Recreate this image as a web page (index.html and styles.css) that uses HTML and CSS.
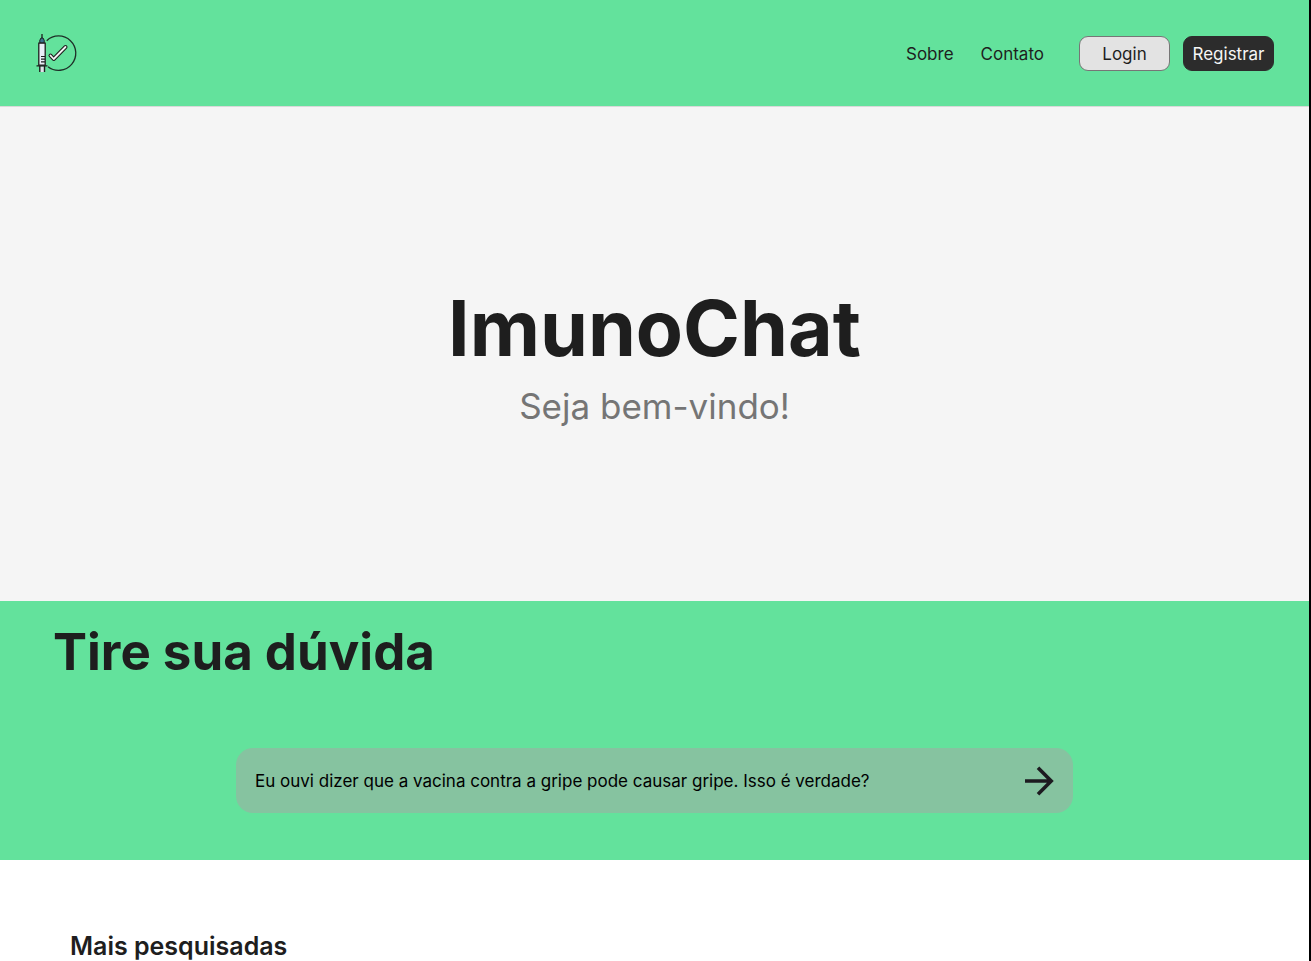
FILE: index.html
```html
<!DOCTYPE html>
<html lang="pt-BR">
<head>
<meta charset="utf-8">
<meta name="viewport" content="width=device-width, initial-scale=1">
<title>ImunoChat</title>
<link rel="stylesheet" href="styles.css">
</head>
<body>
<header class="header">
  <a class="logo" href="#" aria-label="ImunoChat">
    <svg class="logo-icon" viewBox="0 0 42 39" fill="none" aria-hidden="true">
      <path d="M11.700 6.700A17.200 17.200 0 1 1 13 32.700" stroke="#1e3028" stroke-width="1.300"/>
      <path d="M7 0v4" stroke="#1e1e1e" stroke-width="1.300"/>
      <path d="M4.800 9V6.300L6 4h2l1.200 2.300V9z" fill="#37718e" stroke="#1e1e1e"/>
      <path d="M3.800 9.200h6.400v22H3.800z" fill="#e9eef7" stroke="#1e1e1e" stroke-width="1.300"/>
      <path d="M6 22.500h4M6 25.200h4M6 27.900h4" stroke="#1e1e1e" stroke-width="1.200"/>
      <path d="M5 32.500h4.500V38H5z" fill="#dfe3ea"/>
      <path d="M1.500 31.900h11M4.800 32v6M9.500 32v6" stroke="#1e1e1e" stroke-width="1.400"/>
      <path d="m15.500 21.500 3.200 3.500L30.500 13" stroke="#1e1e1e" stroke-width="4" stroke-linecap="round" stroke-linejoin="round"/>
      <path d="m15.500 21.500 3.200 3.500L30.500 13" stroke="#f4f4f4" stroke-width="1.800" stroke-linecap="round" stroke-linejoin="round"/>
    </svg>
  </a>
  <nav class="nav">
    <a class="nav-link" href="#sobre">Sobre</a>
    <a class="nav-link" href="#contato">Contato</a>
  </nav>
  <div class="actions">
    <button class="button button-light" type="button">Login</button>
    <button class="button button-dark" type="button">Registrar</button>
  </div>
</header>
<main>
  <section class="hero">
    <h1 class="hero-title">ImunoChat</h1>
    <p class="hero-subtitle">Seja bem-vindo!</p>
  </section>
  <section class="question">
    <h2 class="question-title">Tire sua dúvida</h2>
    <form class="ask">
      <input class="ask-input" type="text" aria-label="Sua dúvida" value="Eu ouvi dizer que a vacina contra a gripe pode causar gripe. Isso é verdade?">
      <button class="ask-send" type="submit" aria-label="Enviar">
        <svg class="ask-arrow" viewBox="0 0 30 30" fill="none" aria-hidden="true">
          <path d="M1 15h26M14 1.800 27.200 15 14 28.200" stroke="#1d1b20" stroke-width="3.600"/>
        </svg>
      </button>
    </form>
  </section>
  <section class="popular">
    <h2 class="popular-title">Mais pesquisadas</h2>
  </section>
</main>
</body>
</html>
```
FILE: styles.css
```css
* {
  box-sizing: border-box;
}

body {
  margin: 0;
  min-height: 100vh;
  border-right: 2px solid #000;
  background: #fff;
  color: #1e1e1e;
  font-family: Inter, "Liberation Sans", sans-serif;
  font-size: 17px;
}

h1, h2, p {
  margin: 0;
}

.header {
  display: flex;
  align-items: center;
  padding: 34px 35px 33px;
  border-bottom: 1px solid #d9d9d9;
  background: #63e29c;
}

.logo {
  display: block;
  margin-right: auto;
}

.logo-icon {
  display: block;
  width: 42px;
  height: 39px;
}

.nav {
  display: flex;
  gap: 27px;
}

.nav-link {
  color: #1e1e1e;
  text-decoration: none;
}

.actions {
  display: flex;
  gap: 13px;
  margin-left: 35px;
}

.button {
  width: 91px;
  height: 35px;
  padding: 0;
  border: 1px solid #2c2c2c;
  border-radius: 9px;
  font: inherit;
}

.button-light {
  border-color: #767676;
  background: #e3e3e3;
  color: #1e1e1e;
}

.button-dark {
  background: #2c2c2c;
  color: #f5f5f5;
}

.hero {
  padding: 174px 24px;
  background: #f5f5f5;
  text-align: center;
}

.hero-title {
  font-size: 77px;
  line-height: 95px;
}

.hero-subtitle {
  margin-top: 9px;
  color: #757575;
  font-size: 35px;
  line-height: 42px;
}

.question {
  padding: 19px 53px 47px;
  background: #63e29c;
}

.question-title {
  font-size: 51px;
  line-height: 64px;
}

.ask {
  display: flex;
  align-items: center;
  height: 65px;
  margin: 64px 14% 0;
  margin-inline: clamp(0px, 14vw, 183px);
  padding: 0 19px;
  border-radius: 17px;
  background: #86c3a0;
}

.ask-input {
  flex: 1;
  min-width: 0;
  padding: 0;
  border: 0;
  outline: 0;
  background: none;
  color: #000;
  font: inherit;
}

.ask-send {
  padding: 0;
  border: 0;
  background: none;
}

.ask-arrow {
  display: block;
  width: 30px;
  height: 30px;
}

.popular {
  padding: 71px 70px 0;
}

.popular-title {
  font-size: 25px;
  font-weight: 600;
  line-height: 30px;
}
```
